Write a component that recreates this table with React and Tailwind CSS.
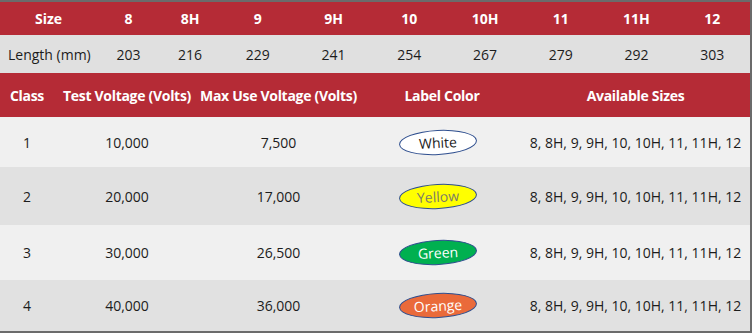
import React from 'react';

const sizes = ['8', '8H', '9', '9H', '10', '10H', '11', '11H', '12'];
const lengths = ['203', '216', '229', '241', '254', '267', '279', '292', '303'];

const classes = [
  { id: '1', test: '10,000', max: '7,500', label: 'White', pill: 'bg-white text-[#1a1a1a]', bg: 'bg-[#f0f0f0]', h: 'h-[50px]' },
  { id: '2', test: '20,000', max: '17,000', label: 'Yellow', pill: 'bg-[#ffff00] text-[#7a7a6a]', bg: 'bg-[#e1e1e1]', h: 'h-[58px]' },
  { id: '3', test: '30,000', max: '26,500', label: 'Green', pill: 'bg-[#00b050] text-white', bg: 'bg-[#f0f0f0]', h: 'h-[55px]' },
  { id: '4', test: '40,000', max: '36,000', label: 'Orange', pill: 'bg-[#ea6a3a] text-white', bg: 'bg-[#e1e1e1]', h: 'h-[51px]' },
];

const gridTop = 'grid grid-cols-[97px_63px_60px_repeat(7,1fr)] items-center';
const gridBottom = 'grid grid-cols-[54px_146px_157px_168px_1fr] items-center';

export default function App() {
  return (
    <div className="w-[752px] h-[333px] bg-white border-t-2 border-r-2 border-b-2 border-[#6b6b6b] overflow-hidden text-[14px] text-[#1c1c1c]" style={{ fontFamily: '"Open Sans", "Liberation Sans", sans-serif' }}>
      <div className={`${gridTop} h-[33px] bg-[#b52b36] text-white font-bold text-center`}>
        <div>Size</div>
        {sizes.map((s) => (
          <div key={s}>{s}</div>
        ))}
      </div>
      <div className={`${gridTop} h-[38px] bg-[#e0e0e0] text-center`}>
        <div className="text-left pl-[8px] whitespace-nowrap">Length (mm)</div>
        {lengths.map((l) => (
          <div key={l}>{l}</div>
        ))}
      </div>

      <div className={`${gridBottom} h-[44px] bg-[#b52b36] text-white font-bold text-center whitespace-nowrap tracking-[-0.3px]`}>
        <div>Class</div>
        <div>Test Voltage (Volts)</div>
        <div>Max Use Voltage (Volts)</div>
        <div className="pl-[2px]">Label Color</div>
        <div className="pr-[4px]">Available Sizes</div>
      </div>
      {classes.map((c) => (
        <div key={c.id} className={`${gridBottom} ${c.h} ${c.bg} text-center`}>
          <div>{c.id}</div>
          <div>{c.test}</div>
          <div>{c.max}</div>
          <div className="flex justify-start pl-[42px]">
            <div className={`w-[78px] h-[25px] rounded-[50%] border border-[#2f4f8f] flex items-center justify-center -rotate-3 text-[14px] ${c.pill}`}>
              {c.label}
            </div>
          </div>
          <div className="pr-[4px] whitespace-nowrap">8, 8H, 9, 9H, 10, 10H, 11, 11H, 12</div>
        </div>
      ))}
    </div>
  );
}
